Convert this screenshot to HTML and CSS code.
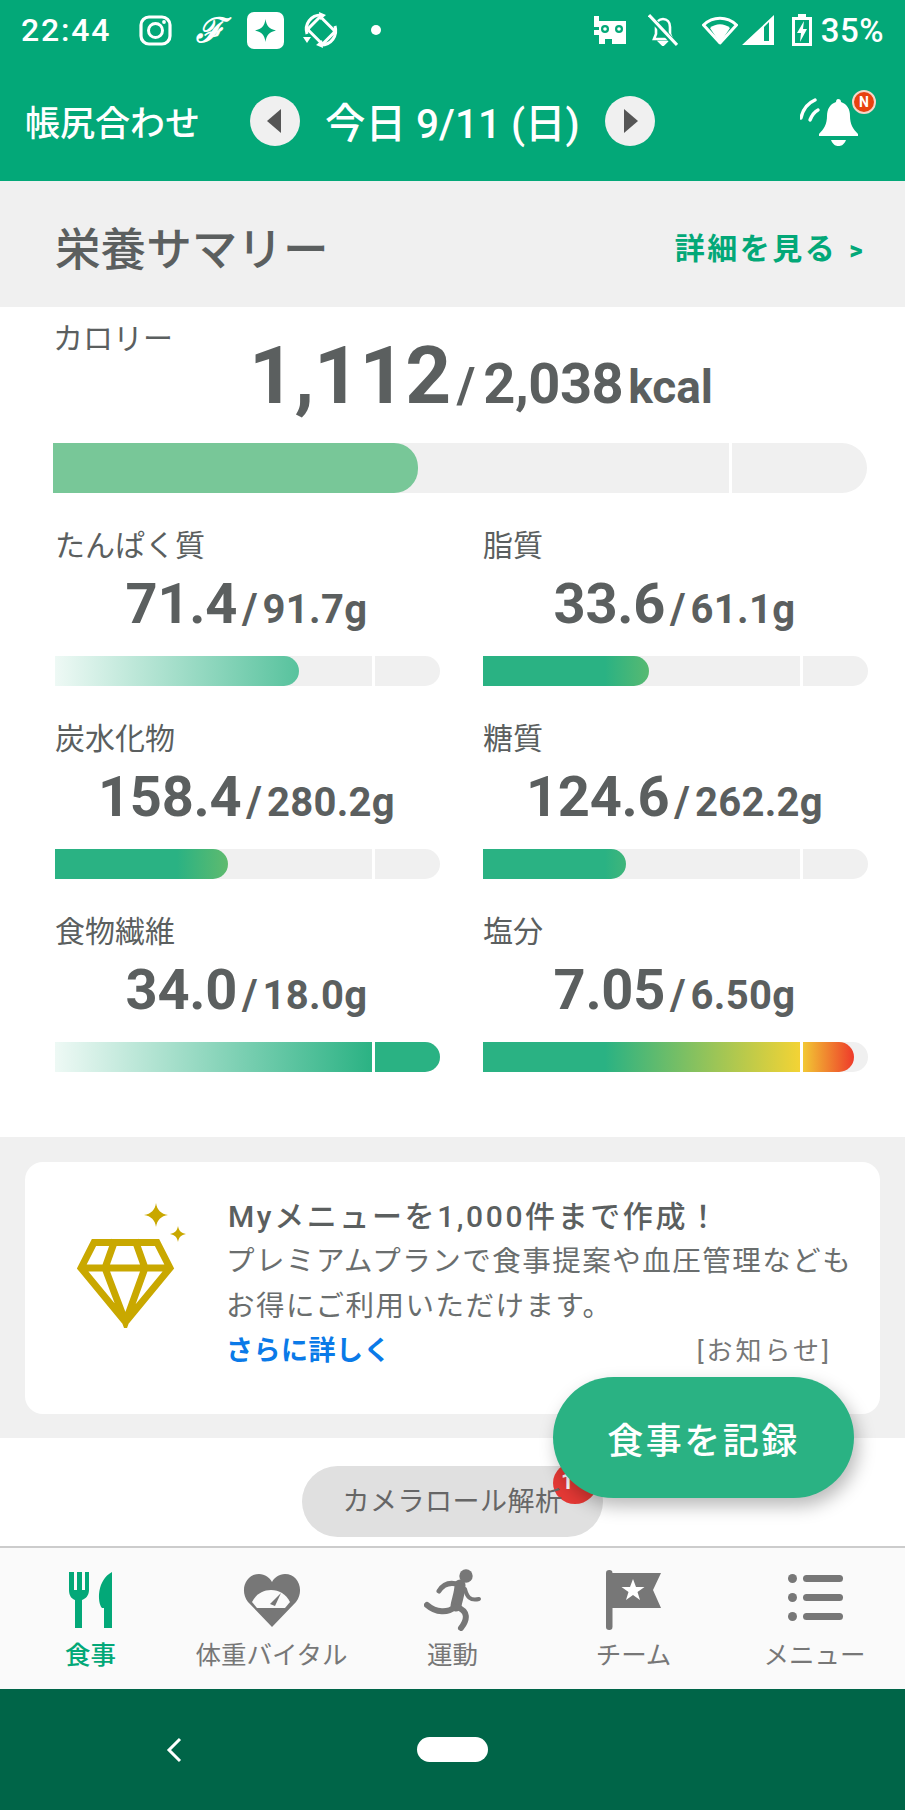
FILE: index.html
```html
<!DOCTYPE html>
<html lang="ja">
<head>
    <meta charset="UTF-8">
    <meta name="viewport" content="width=device-width, initial-scale=1.0">
    <title>栄養サマリー</title>
    <link rel="stylesheet" href="styles.css">
</head>
<body>
<div class="screen">
    <header class="top">
        <div class="status">
            <span class="clock">22:44</span>
            <svg class="si si-ig" viewBox="0 0 33 31"><rect x="2" y="2" width="29" height="27" rx="8" fill="none" stroke="#fff" stroke-width="3.2"/><circle cx="16.5" cy="15.5" r="7" fill="none" stroke="#fff" stroke-width="3"/><circle cx="25" cy="7" r="1.9" fill="#fff"/></svg>
            <span class="si-f">ℱ</span>
            <svg class="si si-star" viewBox="0 0 37 37"><rect width="37" height="37" rx="7" fill="#fff"/><path d="M18.5 7 C19.5 14 22 17 29 18.5 C22 20 19.5 23 18.5 30 C17.5 23 15 20 8 18.5 C15 17 17.5 14 18.5 7Z" fill="#03a878"/></svg>
            <svg class="si si-rot" viewBox="0 0 38 36"><g fill="none" stroke="#fff"><rect x="10" y="8" width="18" height="21" rx="2" transform="rotate(-45 19 18)" stroke-width="3"/><path d="M5 22 C2 12 9 3 19 3" stroke-width="3"/><path d="M33 14 C36 24 29 33 19 33" stroke-width="3"/></g><path d="M17 0 L24 3 L18 8Z M21 36 L14 33 L20 28Z M1 25 L9 25 L5 31Z" fill="#fff"/></svg>
            <span class="si-dot"></span>
            <div class="status-right">
                <svg class="si si-vr" viewBox="0 0 32 28"><path d="M5 5H32V28H18V23H11V28H5Z" fill="#fff"/><circle cx="11" cy="13" r="4" fill="#03a878"/><circle cx="25" cy="13" r="4" fill="#03a878"/><circle cx="11" cy="13" r="1.8" fill="#fff"/><circle cx="25" cy="13" r="1.8" fill="#fff"/><path d="M0 0H5V11H0ZM0 14H5V19H0Z" fill="#fff"/></svg>
                <svg class="si si-mute" viewBox="0 0 30 32"><path d="M6 25 H24 L22 20 V13 C22 8 19 5 15 5 C11 5 8 8 8 13 V20Z M12 28 H18 L15 31Z" fill="none" stroke="#fff" stroke-width="2.6"/><path d="M1 2 L28 31" stroke="#03a878" stroke-width="6"/><path d="M1 1 L29 31" stroke="#fff" stroke-width="3"/></svg>
                <svg class="si si-wifi" viewBox="0 0 36 30"><path d="M1.5 10 C11 1 25 1 34.5 10 L18 28Z" fill="none" stroke="#fff" stroke-width="3" stroke-linejoin="round"/><path d="M8 13 C14 8 22 8 28 13 L18 28Z" fill="#fff"/></svg>
                <svg class="si si-sig" viewBox="0 0 32 30"><path d="M0 30 L32 0 V30Z M22 12 V26 H27 V7Z" fill="#fff" fill-rule="evenodd"/></svg>
                <svg class="si si-bat" viewBox="0 0 20 32"><path d="M6 0H14V3H20V32H0V3H6Z" fill="#fff"/><rect x="3" y="6" width="14" height="23" fill="#03a878"/><path d="M12 7 L5 19 H9 L8 28 L15 15 H11Z" fill="#fff"/></svg>
                <span class="pct">35%</span>
            </div>
        </div>
        <div class="appbar">
            <span class="appbar-left">帳尻合わせ</span>
            <button class="round-btn"><svg viewBox="0 0 50 50"><path d="M31 13 V37 L17 25Z" fill="#555"/></svg></button>
            <span class="today">今日 9/11 (日)</span>
            <button class="round-btn"><svg viewBox="0 0 50 50"><path d="M19 13 V37 L33 25Z" fill="#555"/></svg></button>
            <div class="bell">
                <svg viewBox="0 0 70 60"><g fill="none" stroke="#fff" stroke-width="3.4" stroke-linecap="round"><path d="M1 27 C3 18 8 12 15 9"/><path d="M10 29 C12 24 14 21 18 19"/></g><path d="M38 8 C40 8 41 9 41 11 C47 13 50 18 50 25 C50 33 53 38 58 43 V45 H19 V43 C24 38 27 33 27 25 C27 18 30 13 36 11 C36 9 37 8 38 8Z M31 49 H46 C44 54 41 55 38.500 55 C36 55 33 54 31 49Z" fill="#fff"/></svg>
                <span class="bell-n">N</span>
            </div>
        </div>
    </header>

    <div class="section-title">
        <h2>栄養サマリー</h2>
        <span class="more">詳細を見る<b>&gt;</b></span>
    </div>

    <section class="summary">
        <div class="cal-head">
            <span class="label cal-label">カロリー</span>
            <div class="cal-value"><span class="big">1,112</span><span class="cal-slash">/</span><span class="cal-goal">2,038</span><span class="cal-unit">kcal</span></div>
        </div>
        <div class="bar bar-cal">
            <div class="fill fill-cal" style="width: 365px"></div>
            <i class="mark"></i>
        </div>

        <div class="nutrients">
            <div class="nutrient">
                <div class="label">たんぱく質</div>
                <div class="value"><span class="num">71.4</span><span class="slash">/</span><span class="goal">91.7g</span></div>
                <div class="bar"><div class="fill fill-low" style="width: 244px"></div><i class="mark"></i></div>
            </div>
            <div class="nutrient">
                <div class="label">脂質</div>
                <div class="value"><span class="num">33.6</span><span class="slash">/</span><span class="goal">61.1g</span></div>
                <div class="bar"><div class="fill fill-high" style="width: 166px"></div><i class="mark"></i></div>
            </div>
            <div class="nutrient">
                <div class="label">炭水化物</div>
                <div class="value"><span class="num">158.4</span><span class="slash">/</span><span class="goal">280.2g</span></div>
                <div class="bar"><div class="fill fill-high" style="width: 173px"></div><i class="mark"></i></div>
            </div>
            <div class="nutrient">
                <div class="label">糖質</div>
                <div class="value"><span class="num">124.6</span><span class="slash">/</span><span class="goal">262.2g</span></div>
                <div class="bar"><div class="fill fill-high" style="width: 143px"></div><i class="mark"></i></div>
            </div>
            <div class="nutrient">
                <div class="label">食物繊維</div>
                <div class="value"><span class="num">34.0</span><span class="slash">/</span><span class="goal">18.0g</span></div>
                <div class="bar"><div class="fill fill-low" style="width: 385px"></div><i class="mark"></i></div>
            </div>
            <div class="nutrient">
                <div class="label">塩分</div>
                <div class="value"><span class="num">7.05</span><span class="slash">/</span><span class="goal">6.50g</span></div>
                <div class="bar"><div class="fill fill-high" style="width: 371px"></div><i class="mark"></i></div>
            </div>
        </div>
    </section>

    <section class="promo">
        <div class="promo-card">
            <svg class="diamond" viewBox="0 0 110 125">
                <path d="M17 39.5 H80 L93 65 L48.500 119 L4 65Z M4 65 H93 M38 37 L28 65 L48.500 119 L68 65 L58 37" fill="none" stroke="#c9a800" stroke-width="7" stroke-linejoin="miter"/>
                <path d="M79 0 C80 7 84 11 91 12 C84 13 80 17 79 24 C78 17 74 13 67 12 C74 11 78 7 79 0Z M101 23 C102 28 104 30 109 31 C104 32 102 34 101 39 C100 34 98 32 93 31 C98 30 100 28 101 23Z" fill="#c9a800"/>
            </svg>
            <div class="promo-text">
                <div class="promo-title">Myメニューを1,000件まで作成！</div>
                <div>プレミアムプランで食事提案や血圧管理なども</div>
                <div>お得にご利用いただけます。</div>
                <div class="promo-foot">
                    <span class="promo-link">さらに詳しく</span>
                    <span class="promo-tag">[お知らせ]</span>
                </div>
            </div>
        </div>
    </section>

    <div class="camera-strip">
        <div class="camera-pill">
            <span class="camera-badge">1</span>
            <span class="camera-text">カメラロール解析</span>
        </div>
    </div>

    <nav class="tabs">
        <a class="tab tab-on">
            <span class="tab-icon"><svg width="44" height="56" viewBox="0 0 44 56"><path d="M0 0H5V18H8V0H13V18H16V0H20V18 C20 24 16 27 13 28 V56 H6 V28 C3 27 0 24 0 18Z" fill="#03a878"/><path d="M43 0 V56 H35 V36 H33 C28 30 28 8 43 0Z" fill="#03a878"/></svg></span>
            <span class="tab-label">食事</span>
        </a>
        <a class="tab">
            <span class="tab-icon"><svg width="58" height="53" viewBox="0 0 58 53"><path d="M29 53 L5 28 C-4 16 3 0 16 0 C22 0 27 4 29 8 C31 4 36 0 42 0 C55 0 62 16 53 28Z" fill="#777"/><path d="M9 28 C13 20 20 16 28 16 C36 16 43 20 47 28 L42 34 H14Z" fill="#fafafa"/><path d="M27 30 L38 19 L32 32Z" fill="#777"/></svg></span>
            <span class="tab-label">体重バイタル</span>
        </a>
        <a class="tab">
            <span class="tab-icon"><svg width="58" height="62" viewBox="0 0 58 62"><circle cx="42" cy="7" r="6.700" fill="#777"/><g fill="none" stroke="#777" stroke-linecap="round" stroke-linejoin="round"><path d="M15 22 C20 14 28 13 36 16" stroke-width="5"/><path d="M36 16 C36 24 33 30 32 37" stroke-width="11"/><path d="M41 20 C43 28 46 32 55 30" stroke-width="4"/><path d="M31 38 C24 44 12 44 3 36" stroke-width="6"/><path d="M33 38 C44 42 44 50 37 59" stroke-width="6"/></g></svg></span>
            <span class="tab-label">運動</span>
        </a>
        <a class="tab">
            <span class="tab-icon"><svg width="56" height="60" viewBox="0 0 56 60"><rect x="0" y="0" width="6.500" height="60" rx="3.200" fill="#777"/><path d="M5 3 H55 L47 20 L55 38 H5Z" fill="#777"/><path d="M27 9 L30 17 H38.500 L31.500 22 L34 30 L27 25 L20 30 L22.500 22 L15.500 17 H24Z" fill="#fff"/></svg></span>
            <span class="tab-label">チーム</span>
        </a>
        <a class="tab">
            <span class="tab-icon"><span class="menu-icon"><i></i><i></i><i></i></span></span>
            <span class="tab-label">メニュー</span>
        </a>
    </nav>

    <div class="navbar">
        <svg class="nav-back" viewBox="0 0 16 26"><path d="M14 2 L3 13 L14 24" fill="none" stroke="#fff" stroke-width="3"/></svg>
        <span class="nav-home"></span>
    </div>

    <button class="fab">食事を記録</button>
</div>
</body>
</html>
```
FILE: styles.css
```css
* {
    box-sizing: border-box;
}
body {
    margin: 0;
    font-family: Roboto, 'Noto Sans CJK JP', sans-serif;
    color: #5b5f5f;
    background-color: white;
}
.screen {
    position: relative;
    width: 905px;
    height: 1810px;
    overflow: hidden;
}

/* status bar + app bar */
.top {
    height: 181px;
    background-color: #03a878;
    color: white;
}
.status {
    display: flex;
    align-items: center;
    height: 60px;
    padding-left: 21px;
}
.clock {
    font-size: 32px;
    font-weight: 500;
    letter-spacing: 1.8px;
    width: 89px;
    white-space: nowrap;
}
.si {
    flex: none;
    display: block;
}
.si-ig { width: 33px; height: 31px; margin-left: 29px; }
.si-f {
    width: 28px;
    margin-left: 24px;
    font-family: 'DejaVu Serif', serif;
    font-size: 34px;
    line-height: 36px;
    font-style: italic;
    font-weight: 700;
    text-align: center;
}
.si-star { width: 37px; height: 37px; margin-left: 23px; }
.si-rot { width: 38px; height: 36px; margin-left: 18px; }
.si-dot {
    width: 10px;
    height: 10px;
    margin-left: 31px;
    border-radius: 50%;
    background-color: white;
}
.status-right {
    display: flex;
    align-items: center;
    margin-left: auto;
    padding-right: 21px;
}
.si-vr { width: 32px; height: 28px; }
.si-mute { width: 30px; height: 32px; margin-left: 22px; }
.si-wifi { width: 36px; height: 30px; margin-left: 24px; }
.si-sig { width: 32px; height: 30px; margin-left: 4px; }
.si-bat { width: 20px; height: 32px; margin-left: 18px; }
.pct {
    font-size: 33px;
    font-weight: 500;
    margin-left: 9px;
    letter-spacing: 0.5px;
}

.appbar {
    display: flex;
    align-items: center;
    height: 121px;
    padding-left: 25px;
}
.appbar-left {
    width: 225px;
    font-size: 35px;
    font-weight: 500;
    white-space: nowrap;
}
.round-btn {
    width: 50px;
    height: 50px;
    padding: 0;
    border: none;
    border-radius: 50%;
    background-color: #f0f0f0;
}
.round-btn svg {
    display: block;
}
.today {
    width: 305px;
    padding-left: 25px;
    font-size: 40.5px;
    font-weight: 500;
    white-space: nowrap;
}
.bell {
    position: relative;
    width: 70px;
    height: 60px;
    margin-left: 145px;
}
.bell-n {
    position: absolute;
    left: 52px;
    top: -1px;
    width: 24px;
    height: 24px;
    border: 2px solid #f6d6c8;
    border-radius: 50%;
    background-color: #e8420f;
    font-size: 14px;
    font-weight: 700;
    line-height: 20px;
    text-align: center;
}

/* gray title row */
.section-title {
    display: flex;
    align-items: center;
    justify-content: space-between;
    height: 126px;
    padding: 4px 40px 0 55px;
    background-color: #f0f0f0;
}
.section-title h2 {
    margin: 0;
    font-size: 45.6px;
    font-weight: 500;
}
.more {
    font-size: 30px;
    font-weight: 700;
    letter-spacing: 2.5px;
    color: #03a878;
}
.more b {
    font-size: 26px;
    margin-left: 12px;
}

/* summary */
.summary {
    height: 830px;
    padding: 0 38px 0 53px;
}
.cal-head {
    display: flex;
    height: 136px;
}
.label {
    font-size: 30px;
    line-height: 32px;
    white-space: nowrap;
}
.cal-label {
    width: 166px;
    margin-top: 16px;
}
.cal-value {
    margin-top: 29px;
    margin-left: 30px;
    line-height: 80px;
    white-space: nowrap;
    font-weight: 700;
}
.big {
    font-size: 80px;
    letter-spacing: -0.3px;
}
.cal-slash {
    font-size: 50px;
    margin: 0 8px 0 6px;
    line-height: 1;
}
.cal-goal {
    font-size: 56px;
    letter-spacing: -0.5px;
    line-height: 1;
}
.cal-unit {
    font-size: 46px;
    margin-left: 5px;
    line-height: 1;
}
.bar {
    position: relative;
    height: 30px;
    border-radius: 0 15px 15px 0;
    background-color: #f0f0f0;
}
.bar-cal {
    width: 814px;
    height: 50px;
    border-radius: 0 25px 25px 0;
}
.fill {
    height: 100%;
    border-radius: 0 15px 15px 0;
}
.fill-cal {
    border-radius: 0 24px 24px 0;
    background-color: #78c798;
}
.fill-low {
    background-image: linear-gradient(90deg, #eef9f5 0, #2ab283 318px);
    background-size: 385px 100%;
    background-repeat: no-repeat;
}
.fill-low[style*="385"] {
    background-color: #2ab283;
}
.fill-high {
    background-image: linear-gradient(90deg, #2ab283 122px, #f2d335 316px, #ee3a2a 371px);
    background-size: 385px 100%;
    background-repeat: no-repeat;
}
.mark {
    position: absolute;
    left: 317px;
    top: 0;
    width: 3px;
    height: 100%;
    background-color: white;
}
.bar-cal .mark {
    left: 676px;
}
.nutrients {
    display: grid;
    grid-template-columns: 385px 385px;
    column-gap: 43px;
    row-gap: 37px;
    margin-top: 37px;
    margin-left: 2px;
}
.value {
    margin-top: 14px;
    margin-bottom: 24px;
    padding-right: 2px;
    line-height: 56px;
    height: 56px;
    text-align: center;
    font-weight: 700;
    white-space: nowrap;
}
.num {
    font-size: 56px;
    letter-spacing: -0.3px;
}
.slash {
    font-size: 42px;
    margin: 0 5px;
    line-height: 1;
}
.goal {
    font-size: 40px;
    letter-spacing: 0.3px;
    line-height: 1;
}

/* promo card */
.promo {
    height: 301px;
    padding: 25px;
    background-color: #f0f0f0;
}
.promo-card {
    display: flex;
    height: 252px;
    padding: 32px 10px 0 52px;
    border-radius: 18px;
    background-color: white;
}
.diamond {
    flex: none;
    width: 110px;
    height: 125px;
    margin-top: 9px;
}
.promo-text {
    flex: 1;
    margin-left: 39px;
    font-size: 28.5px;
    line-height: 45px;
    letter-spacing: 1.5px;
    color: #6a6e6e;
    white-space: nowrap;
}
.promo-title {
    font-size: 30px;
    font-weight: 500;
    color: #5b5f5f;
    letter-spacing: 2.6px;
    padding-left: 2px;
}
.promo-foot {
    display: flex;
    justify-content: space-between;
    padding-right: 38px;
}
.promo-link {
    font-size: 27px;
    font-weight: 700;
    letter-spacing: 0.5px;
    color: #0a7ae8;
}
.promo-tag {
    font-size: 26px;
    letter-spacing: 3px;
    color: #777;
}

/* camera roll */
.camera-strip {
    height: 108px;
    padding-top: 28px;
}
.camera-pill {
    position: relative;
    width: 301px;
    height: 71px;
    margin: 0 auto;
    border-radius: 36px;
    background-color: #e0e0e0;
    font-size: 27px;
    letter-spacing: 0.5px;
    line-height: 73px;
    text-align: center;
    color: #666;
}
.camera-badge {
    position: absolute;
    left: 251px;
    top: -4px;
    width: 44px;
    height: 42px;
    border-radius: 50%;
    background-color: #e53935;
    color: white;
    font-size: 22px;
    font-weight: 700;
    line-height: 40px;
    text-align: left;
    padding-left: 8px;
}
.camera-text {
    position: relative;
}

/* tabs */
.tabs {
    display: grid;
    grid-template-columns: repeat(5, 1fr);
    height: 143px;
    border-top: 2px solid #ccc;
    background-color: #fafafa;
}
.tab {
    display: flex;
    flex-direction: column;
    align-items: center;
    padding-top: 21px;
}
.tab-icon {
    display: flex;
    align-items: center;
    justify-content: center;
    height: 62px;
}
.tab-label {
    margin-top: 9px;
    font-size: 25.5px;
    line-height: 30px;
    color: #777;
    white-space: nowrap;
}
.tab-on .tab-label {
    color: #03a878;
    font-weight: 500;
}
.menu-icon {
    display: flex;
    flex-direction: column;
    gap: 12px;
    margin-top: -6px;
}
.menu-icon i {
    position: relative;
    display: block;
    width: 40px;
    height: 7px;
    margin-left: 17px;
    border-radius: 4px;
    background-color: #777;
}
.menu-icon i::before {
    content: "";
    position: absolute;
    left: -15px;
    top: -1px;
    width: 9px;
    height: 9px;
    border-radius: 50%;
    background-color: #777;
}

/* android nav */
.navbar {
    display: flex;
    align-items: center;
    height: 121px;
    padding-left: 166px;
    background-color: #006548;
}
.nav-back {
    width: 16px;
    height: 26px;
    margin-right: 235px;
}
.nav-home {
    width: 71px;
    height: 25px;
    border-radius: 13px;
    background-color: white;
}

.fab {
    position: absolute;
    left: 553px;
    top: 1377px;
    width: 301px;
    height: 121px;
    border: none;
    border-radius: 61px;
    background-color: #2ab283;
    color: white;
    font-family: inherit;
    font-size: 36px;
    font-weight: 500;
    letter-spacing: 2.5px;
    box-shadow: 4px 8px 18px rgba(0, 0, 0, 0.28);
}
```
